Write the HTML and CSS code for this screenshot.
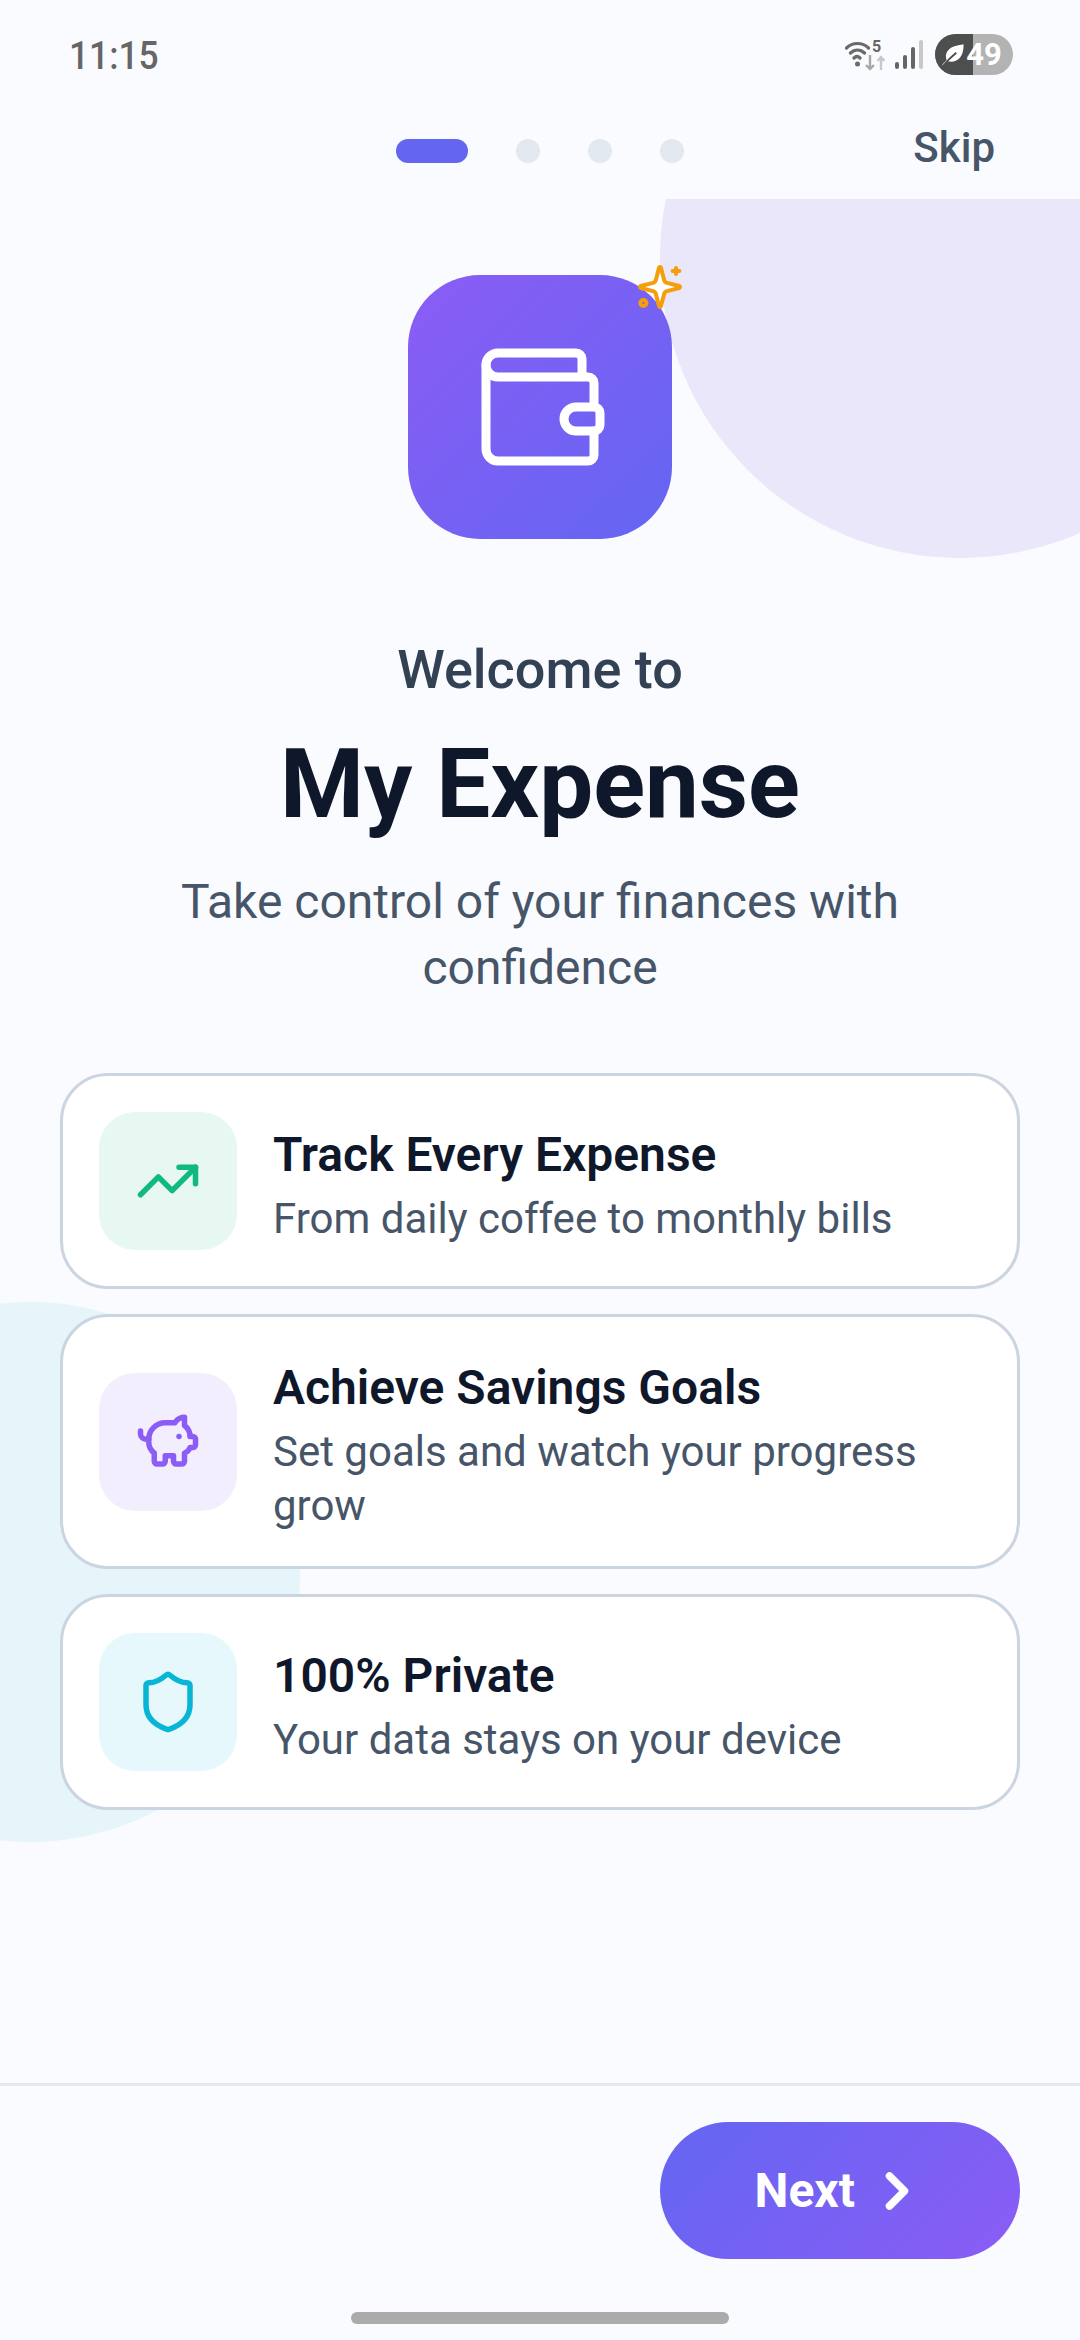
FILE: index.html
```html
<!DOCTYPE html>
<html lang="en">
<head>
    <meta charset="UTF-8">
    <meta name="viewport" content="width=device-width, initial-scale=1.0">
    <title>My Expense</title>
    <link rel="stylesheet" href="styles.css">
</head>
<body>
    <div class="status-bar">
        <span class="status-time">11:15</span>
        <div class="status-icons">
            <svg class="wifi-icon" viewBox="0 0 40 40" width="40" height="40">
                <path d="M1.500 13c6-6 16-6 22 0M5.500 18c4-4 10-4 14 0M9 23c2-2 4-2 6 0" fill="none" stroke="#6b6b6b" stroke-width="3.2" stroke-linecap="round"/>
                <circle cx="12.500" cy="29" r="2.500" fill="#6b6b6b"/>
                <path d="M25 20v14M21 30l4 4 4-4" fill="none" stroke="#a8a8a8" stroke-width="2.400"/>
                <path d="M36 35V22M32.500 26l3.500-4 3.500 4" fill="none" stroke="#c8c8c8" stroke-width="2.400"/>
            </svg>
            <span class="wifi-num">5</span>
            <div class="signal-bars">
                <i class="bar bar-1"></i>
                <i class="bar bar-2"></i>
                <i class="bar bar-3"></i>
                <i class="bar bar-4"></i>
            </div>
            <div class="battery">
                <div class="battery-fill">
                    <svg viewBox="0 0 24 24" width="26" height="26">
                        <path d="M3 21c2-2 3-3 6-6M7 17C4 9 10 4 21 3c0 10-5 16-14 14z" fill="#fff" stroke="#fff" stroke-width="1.500" stroke-linecap="round"/>
                        <path d="M3 22c4-5 7-8 12-12" fill="none" stroke="#4d4f4f" stroke-width="1.800"/>
                    </svg>
                </div>
                <span class="battery-num">49</span>
            </div>
        </div>
    </div>

    <div class="top-bar">
        <div></div>
        <div class="page-dots">
            <span class="dot active"></span>
            <span class="dot"></span>
            <span class="dot"></span>
            <span class="dot"></span>
        </div>
        <span class="skip">Skip</span>
    </div>

    <main class="content">
        <div class="blob blob-purple"></div>
        <div class="blob blob-cyan"></div>

        <div class="hero">
            <div class="hero-icon">
                <svg viewBox="0 0 24 24" width="144" height="144" fill="none" stroke="#fff" stroke-width="1.500" stroke-linecap="round" stroke-linejoin="round">
                    <path d="M19 7V4a1 1 0 0 0-1-1H5a2 2 0 0 0 0 4h15a1 1 0 0 1 1 1v4h-3a2 2 0 0 0 0 4h3a1 1 0 0 0 1-1v-2a1 1 0 0 0-1-1"/>
                    <path d="M3 5v14a2 2 0 0 0 2 2h15a1 1 0 0 0 1-1v-4"/>
                </svg>
                <svg class="sparkle" viewBox="0 0 24 24" width="48" height="48" fill="none" stroke="#f59e0b" stroke-width="2" stroke-linecap="round" stroke-linejoin="round">
                    <path fill="#fff" d="M9.937 15.500A2 2 0 0 0 8.500 14.063l-6.135-1.582a.5.5 0 0 1 0-.962L8.500 9.936A2 2 0 0 0 9.937 8.500l1.582-6.135a.5.5 0 0 1 .963 0L14.063 8.500A2 2 0 0 0 15.500 9.937l6.135 1.581a.5.5 0 0 1 0 .964L15.500 14.063a2 2 0 0 0-1.437 1.437l-1.582 6.135a.5.5 0 0 1-.963 0z"/>
                    <path d="M20 2.500v3"/>
                    <path d="M21.700 4h-3.400"/>
                    <circle cx="3.700" cy="20" r="1.500"/>
                </svg>
            </div>
        </div>

        <p class="welcome">Welcome to</p>
        <h1 class="app-name">My Expense</h1>
        <p class="tagline">Take control of your finances with confidence</p>

        <div class="features">
            <div class="card">
                <div class="card-icon icon-green">
                    <svg viewBox="0 0 24 24" width="66" height="66" fill="none" stroke="currentColor" stroke-width="2" stroke-linecap="round" stroke-linejoin="round">
                        <polyline points="22 7 13.500 15.500 8.500 10.500 2 17"/>
                        <polyline points="16 7 22 7 22 13"/>
                    </svg>
                </div>
                <div class="card-text">
                    <h3>Track Every Expense</h3>
                    <p>From daily coffee to monthly bills</p>
                </div>
            </div>
            <div class="card">
                <div class="card-icon icon-purple">
                    <svg viewBox="0 0 24 24" width="66" height="66" fill="none" stroke="currentColor" stroke-width="2" stroke-linecap="round" stroke-linejoin="round">
                        <path d="M11 17h3v2a1 1 0 0 0 1 1h2a1 1 0 0 0 1-1v-3a3.160 3.160 0 0 0 2-2h1a1 1 0 0 0 1-1v-2a1 1 0 0 0-1-1h-1a5 5 0 0 0-2-4V3a4 4 0 0 0-3.200 1.600l-.3.4H11a6 6 0 0 0-6 6v1a5 5 0 0 0 2 4v3a1 1 0 0 0 1 1h2a1 1 0 0 0 1-1z"/>
                        <path d="M16 10h.01"/>
                        <path d="M2 8v1a2 2 0 0 0 2 2h1"/>
                    </svg>
                </div>
                <div class="card-text">
                    <h3>Achieve Savings Goals</h3>
                    <p>Set goals and watch your progress grow</p>
                </div>
            </div>
            <div class="card">
                <div class="card-icon icon-cyan">
                    <svg viewBox="0 0 24 24" width="66" height="66" fill="none" stroke="currentColor" stroke-width="2" stroke-linecap="round" stroke-linejoin="round">
                        <path d="M20 13c0 5-3.500 7.500-7.660 8.950a1 1 0 0 1-.67-.01C7.500 20.500 4 18 4 13V6a1 1 0 0 1 1-1c2 0 4.500-1.200 6.240-2.720a1.170 1.170 0 0 1 1.520 0C14.510 3.810 17 5 19 5a1 1 0 0 1 1 1z"/>
                    </svg>
                </div>
                <div class="card-text">
                    <h3>100% Private</h3>
                    <p>Your data stays on your device</p>
                </div>
            </div>
        </div>
    </main>

    <footer class="bottom-bar">
        <button class="next-btn">
            Next
            <svg viewBox="0 0 24 24" width="60" height="60" fill="none" stroke="#fff" stroke-width="3" stroke-linecap="round" stroke-linejoin="round">
                <path d="m9 18 6-6-6-6"/>
            </svg>
        </button>
    </footer>
    <div class="home-area">
        <div class="home-bar"></div>
    </div>
</body>
</html>
```

FILE: styles.css
```css
/* Page */
body {
    margin: 0;
    width: 1080px;
    height: 2340px;
    display: flex;
    flex-direction: column;
    overflow: hidden;
    background: #fafbfe;
    font-family: Roboto, sans-serif;
    color: #0f172a;
}

/* Status bar */
.status-bar {
    height: 90px;
    flex: none;
    display: flex;
    justify-content: space-between;
    align-items: center;
    padding: 22px 67px 0 69px;
    box-sizing: border-box;
}

.status-time {
    font-size: 38px;
    font-weight: 500;
    color: #666;
    transform: scaleX(0.93);
    transform-origin: left center;
}

.status-icons {
    display: flex;
    align-items: center;
    position: relative;
    margin-top: -3px;
}

.wifi-icon {
    margin-right: 10px;
}

.wifi-num {
    position: absolute;
    left: 27px;
    top: 3px;
    font-size: 16px;
    font-weight: 700;
    color: #666;
}

.signal-bars {
    display: flex;
    align-items: flex-end;
    gap: 4px;
    height: 29px;
    margin-right: 12px;
}

.bar {
    width: 4px;
    background: #666;
    border-radius: 2px;
}

.bar-1 { height: 7px; }
.bar-2 { height: 14px; }
.bar-3 { height: 22px; }
.bar-4 { height: 29px; background: #c8c8c8; }

.battery {
    width: 78px;
    height: 41px;
    border-radius: 21px;
    overflow: hidden;
    position: relative;
    background: #b3b3b3;
}

.battery-fill {
    width: 38px;
    height: 41px;
    background: #4d4f4f;
    display: flex;
    align-items: center;
    padding-left: 5px;
    box-sizing: border-box;
}

.battery-num {
    position: absolute;
    left: 27px;
    top: 0;
    width: 44px;
    line-height: 41px;
    text-align: center;
    font-size: 31px;
    font-weight: 700;
    color: #fff;
}

/* Top bar */
.top-bar {
    height: 109px;
    flex: none;
    display: grid;
    grid-template-columns: 1fr auto 1fr;
    align-items: center;
    padding: 12px 85px 0;
    box-sizing: border-box;
}

.page-dots {
    display: flex;
    gap: 48px;
}

.dot {
    width: 24px;
    height: 24px;
    border-radius: 12px;
    background: #e2e8f0;
}

.dot.active {
    width: 72px;
    background: #6366f1;
}

.skip {
    justify-self: end;
    margin-top: -6px;
    font-size: 42px;
    font-weight: 500;
    color: #475569;
}

/* Main area */
.content {
    flex: 1;
    position: relative;
    overflow: hidden;
    padding: 76px 60px 0;
    text-align: center;
}

.blob {
    position: absolute;
    border-radius: 50%;
}

.blob-purple {
    width: 600px;
    height: 600px;
    left: 660px;
    top: -241px;
    background: #ebe7fb;
}

.blob-cyan {
    width: 540px;
    height: 540px;
    left: -240px;
    top: 1103px;
    background: #e5f5f9;
}

.hero {
    position: relative;
    display: flex;
    justify-content: center;
    margin-bottom: 99px;
}

.hero-icon {
    width: 264px;
    height: 264px;
    border-radius: 72px;
    background: linear-gradient(135deg, #8b5cf6, #6366f1);
    display: flex;
    align-items: center;
    justify-content: center;
    position: relative;
}

.sparkle {
    position: absolute;
    top: -12px;
    right: -12px;
}

.welcome {
    position: relative;
    margin: 0;
    font-size: 54px;
    line-height: 64px;
    font-weight: 500;
    color: #334155;
}

.app-name {
    position: relative;
    margin: 26px 0 29px;
    font-size: 96px;
    line-height: 112px;
    font-weight: 700;
    color: #0f172a;
}

.tagline {
    position: relative;
    margin: 0 auto 72px;
    width: 800px;
    font-size: 48px;
    line-height: 66px;
    color: #475569;
}

/* Feature cards */
.features {
    position: relative;
    display: flex;
    flex-direction: column;
    gap: 25px;
}

.card {
    display: flex;
    align-items: center;
    gap: 36px;
    padding: 36px;
    background: #fff;
    border: 3px solid #cbd5e1;
    border-radius: 48px;
    text-align: left;
}

.card-icon {
    width: 138px;
    height: 138px;
    flex: none;
    border-radius: 36px;
    display: flex;
    align-items: center;
    justify-content: center;
}

.icon-green { background: #e7f8f2; color: #10b981; }
.icon-purple { background: #f3eefe; color: #8b5cf6; }
.icon-cyan { background: #e6f8fb; color: #06b6d4; }

.card-text {
    margin: 3px 0 -3px;
}

.card-text h3 {
    margin: 0 0 5px;
    font-size: 48px;
    line-height: 64px;
    font-weight: 600;
    color: #0f172a;
}

.card-text p {
    margin: 0;
    font-size: 42px;
    line-height: 54px;
    color: #475569;
}

/* Footer */
.bottom-bar {
    flex: none;
    display: flex;
    justify-content: flex-end;
    padding: 36px 60px 0;
    border-top: 3px solid #e2e8f0;
}

.next-btn {
    height: 137px;
    padding: 0 93px 0 95px;
    display: flex;
    align-items: center;
    gap: 12px;
    border: none;
    border-radius: 69px;
    background: linear-gradient(135deg, #6366f1, #8b5cf6);
    color: #fff;
    font-family: Roboto, sans-serif;
    font-size: 48px;
    font-weight: 700;
}

.home-area {
    height: 81px;
    flex: none;
    display: flex;
    justify-content: center;
    align-items: flex-start;
    padding-top: 53px;
    box-sizing: border-box;
}

.home-bar {
    width: 378px;
    height: 12px;
    border-radius: 6px;
    background: #ababab;
}
```
